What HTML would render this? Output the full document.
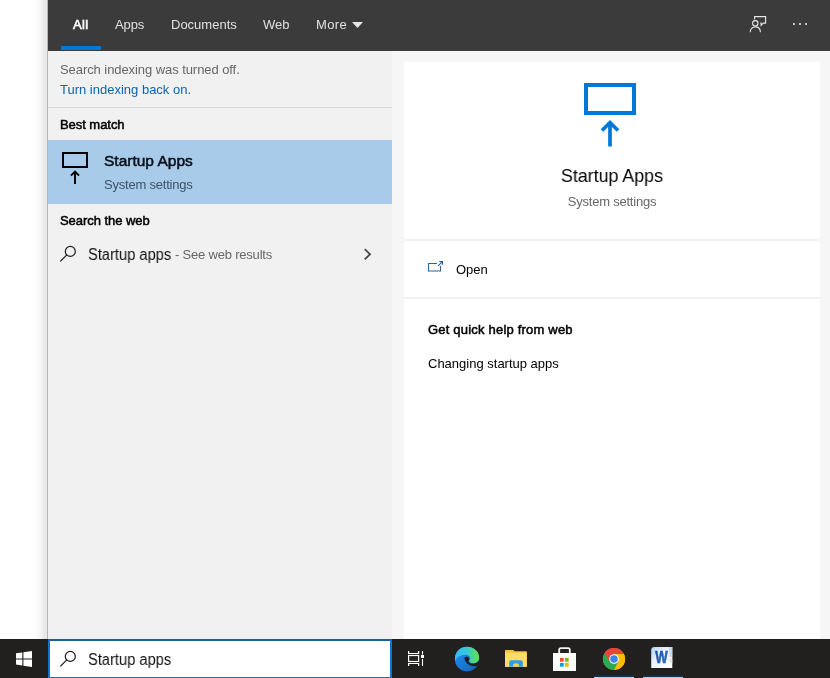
<!DOCTYPE html>
<html lang="en">
<head>
<meta charset="utf-8">
<title>Startup apps - Search</title>
<style>
*{margin:0;padding:0;box-sizing:border-box}
html,body{width:830px;height:678px;overflow:hidden;background:#fff}
body{position:relative;font-family:"Liberation Sans",sans-serif;font-size:13px;color:#000;-webkit-font-smoothing:antialiased}
.abs{position:absolute}
.t{will-change:transform;position:absolute;white-space:nowrap;line-height:1}
#shadow{left:34px;top:0;width:13px;height:639px;background:linear-gradient(to right,#fff 0,#f8f8f8 38%,#f3f3f3 62%,#e9e9e9 74%,#e8e8e8 100%)}
#edge1{left:47px;top:0;width:1px;height:639px;background:#b4b4b4}
#hdr{left:48px;top:0;width:782px;height:51px;background:#3b3b3b}
#tabline{left:61px;top:45.5px;width:40px;height:4.5px;background:#0078d7}
#left{left:48px;top:51px;width:344px;height:588px;background:#f1f1f1}
#right{left:392px;top:51px;width:438px;height:588px;background:#f6f6f6}
#card{left:404px;top:62px;width:416px;height:577px;background:#fff}
#sel{left:48px;top:140px;width:344px;height:64px;background:#a7cbe9}
#div1{left:48px;top:107px;width:344px;height:1px;background:#d9d9d9}
.cdiv{left:404px;width:416px;height:2px;background:#f2f2f2}
#task{left:0;top:639px;width:830px;height:39px;background:#21201f}
#sbox{left:48px;top:639px;width:344px;height:40px;background:#fff;border:2px solid #0a76d3;border-top-color:#1c5e9b}
.tab{color:#e0e0e0;font-size:13px}
.gray{color:#666}
.b{-webkit-text-stroke:0.5px currentColor;letter-spacing:-0.05px}
</style>
</head>
<body>
<div class="abs" id="shadow"></div>
<div class="abs" id="edge1"></div>
<div class="abs" id="hdr"></div>
<div class="abs" id="tabline"></div>
<div class="t tab" style="left:72.5px;top:18px;color:#fff;letter-spacing:0.35px;-webkit-text-stroke:0.6px #fff">All</div>
<div class="t tab" style="left:115px;top:18px;letter-spacing:-0.1px">Apps</div>
<div class="t tab" style="left:170.5px;top:18px">Documents</div>
<div class="t tab" style="left:263px;top:18px">Web</div>
<div class="t tab" style="left:315.5px;top:18px;letter-spacing:0.4px">More</div>
<svg class="abs" id="tri" style="left:352px;top:22px" width="11" height="6" viewBox="0 0 11 6"><path d="M0 0h11L5.5 6z" fill="#e6e6e6"/></svg>
<svg class="abs" id="fb" style="left:749px;top:15px" width="18" height="18" viewBox="0 0 18 18" fill="none" stroke="#e6e6e6" stroke-width="1.100"><path d="M5.600 4.500V1.600h11V8.100H14.300l-2.200 2.300V8.100h-.8"/><circle cx="6.300" cy="8.300" r="2.700"/><path d="M1.200 17.300c0-3.400 2.200-5.400 5.100-5.400s5.100 2 5.100 5.400"/></svg>
<svg class="abs" id="dots" style="left:792px;top:22px" width="16" height="4" viewBox="0 0 16 4"><circle cx="2" cy="2" r="1.100" fill="#e6e6e6"/><circle cx="8" cy="2" r="1.100" fill="#e6e6e6"/><circle cx="14" cy="2" r="1.100" fill="#e6e6e6"/></svg>

<div class="abs" id="left"></div>
<div class="abs" id="right"></div>
<div class="abs" id="card"></div>

<div class="t gray" style="left:60px;top:63px;letter-spacing:-0.07px">Search indexing was turned off.</div>
<div class="t" style="left:60px;top:83px;color:#0a64b0">Turn indexing back on.</div>
<div class="abs" id="div1"></div>
<div class="t b" style="left:60px;top:118px">Best match</div>
<div class="abs" id="sel"></div>
<svg class="abs" id="ico1" style="left:61px;top:151px" width="28" height="35" viewBox="0 0 28 35" fill="none" stroke="#000" stroke-width="2"><rect x="2" y="2" width="24" height="14"/><path d="M14 33V20.800M10 24.700l4-4 4 4" stroke-width="1.900"/></svg>
<div class="t b" style="left:104px;top:152.8px;font-size:15.5px;letter-spacing:0px;color:#050d18">Startup Apps</div>
<div class="t" style="left:104px;top:178px;letter-spacing:-0.21px;color:#3e5269">System settings</div>
<div class="t b" style="left:60px;top:214px">Search the web</div>
<svg class="abs" id="mag1" style="left:59px;top:245px" width="18" height="18" viewBox="0 0 18 18" fill="none" stroke="#1a1a1a" stroke-width="1.2"><circle cx="11.3" cy="6.4" r="5"/><path d="M7.800 9.900L1.300 16.400"/></svg>
<div class="t" style="left:88px;top:247px;font-size:16px;color:#111;transform:scaleX(.917);transform-origin:0 50%">Startup apps</div>
<div class="t gray" style="left:175.2px;top:248.4px;letter-spacing:-0.2px">- See web results</div>
<svg class="abs" id="chev" style="left:362px;top:248px" width="10" height="13" viewBox="0 0 10 13" fill="none" stroke="#444" stroke-width="1.7"><path d="M2.7 1.1l5.4 5.1L2.7 11.3"/></svg>

<svg class="abs" id="ico2" style="left:582px;top:82px" width="56" height="66" viewBox="0 0 56 66" fill="none" stroke="#0078d7" stroke-width="4"><rect x="4" y="3" width="48" height="28"/><path d="M28 64.5V41M20 48.5l8-8 8 8" stroke-width="3.7"/></svg>
<div class="t" style="left:404px;width:416px;text-align:center;top:166.4px;font-size:19px;color:#000;transform:scaleX(.9365);transform-origin:50% 50%">Startup Apps</div>
<div class="t gray" style="left:404px;width:416px;text-align:center;top:195px;letter-spacing:-0.22px">System settings</div>
<div class="abs cdiv" style="top:239px"></div>
<svg class="abs" id="open" style="left:427px;top:260px" width="17" height="14" viewBox="0 0 17 14" fill="none" stroke="#2e6396" stroke-width="1.1"><path d="M10 3.5H1.5V11h12V6"/><path d="M12.3 1.5h3.2v3.2M15.5 1.5l-4.300 4.300"/></svg>
<div class="t" style="left:456px;top:263px">Open</div>
<div class="abs cdiv" style="top:297px"></div>
<div class="t b" style="left:428px;top:323px;letter-spacing:0.2px">Get quick help from web</div>
<div class="t" style="left:428px;top:357px">Changing startup apps</div>

<div class="abs" id="task"></div>
<svg class="abs" id="win" style="left:16px;top:651px" width="16" height="16" viewBox="0 0 16 16" fill="#fff"><path d="M0 2.300l6.300-.9v6H0zM7.400 1.250L16 0v7.400H7.400zM0 8.500h6.300v6L0 13.600zM7.400 8.500H16V16l-8.600-1.250z"/></svg>
<div class="abs" id="sbox"></div>
<svg class="abs" id="mag2" style="left:59px;top:650.2px" width="18" height="18" viewBox="0 0 18 18" fill="none" stroke="#1a1a1a" stroke-width="1.2"><circle cx="11.3" cy="6.4" r="5"/><path d="M7.800 9.900L1.300 16.400"/></svg>
<div class="t" style="left:88px;top:651.5px;font-size:16px;color:#111;transform:scaleX(.917);transform-origin:0 50%">Startup apps</div>

<svg class="abs" id="tv" style="left:406px;top:649px" width="20" height="19" viewBox="0 0 20 19" fill="none" stroke="#fff" stroke-width="1.200"><path d="M2.600 2v2.500h10V2M2.600 17v-2.500h10V17"/><rect x="2.600" y="6.500" width="10" height="6"/><path d="M16.500 2v3.500M16.500 10v7" stroke-width="1.100"/><rect x="15" y="6" width="3" height="3" fill="#fff" stroke="none"/></svg>
<svg class="abs" id="edge" style="left:454px;top:646.3px" width="26" height="26" viewBox="0 0 26 26"><defs><linearGradient id="eg1" x1="0" y1="0" x2="1" y2="0"><stop offset="0" stop-color="#3bb8f4"/><stop offset=".45" stop-color="#33c8dc"/><stop offset="1" stop-color="#62e248"/></linearGradient><linearGradient id="eg2" x1="0" y1="0" x2="1" y2="1"><stop offset="0" stop-color="#2196f6"/><stop offset="1" stop-color="#1260b8"/></linearGradient></defs><circle cx="13" cy="13" r="12.2" fill="url(#eg2)"/><path d="M1 12C1.500 5.500 6.500.8 13 .8c7 0 12.200 5 12.200 10.700 0 3.300-2.500 5.700-5.700 5.700-2.600 0-4.300-1-4.300-2.400 0-.9.900-1.300.9-2.700 0-2-1.800-3.300-4-3.300C7 8.800 3 10.500 1 15z" fill="url(#eg1)"/><path d="M10.500 11.500c2-1.500 4.700-.5 4.800 1.500 0 1-.8 1.300-.8 2.300 0 1.500 2 2.500 4.500 2.500 2.700 0 5-1.500 6.200-3.500.4 2 .1 3.700-.7 5.200-2.500 1-6 1-9-.5-3-1.500-5-4-5-7.500z" fill="#21201f"/></svg>
<svg class="abs" id="exp" style="left:504px;top:648px" width="24" height="20" viewBox="0 0 24 20"><path d="M1 1.900h8.300l1.300 1.300H22.800V18.800H1z" fill="#f3c13f"/><path d="M1 4.600h21.800V18.800H1z" fill="#ffdc68"/><path d="M5.200 18.800v-4.300c0-1.400 1-2.300 2.300-2.300h9c1.300 0 2.300.9 2.300 2.300v4.300z" fill="#2f9be8"/><path d="M9 18.800v-1.300c0-1.300 1.300-2.200 3-2.200s3 .9 3 2.200v1.300z" fill="#f7d24e"/></svg>
<svg class="abs" id="store" style="left:552px;top:646px" width="25" height="26" viewBox="0 0 25 26"><path d="M7.200 7V3.800c0-1 .7-1.700 1.700-1.700h7.200c1 0 1.700.7 1.700 1.700V7" fill="none" stroke="#f4f4f4" stroke-width="1.800"/><rect x="1" y="7" width="23" height="18" fill="#fbfbfb"/><rect x="8" y="12" width="3.700" height="3.700" fill="#f04e23"/><rect x="13" y="12" width="3.700" height="3.700" fill="#7fbb00"/><rect x="8" y="17" width="3.700" height="3.700" fill="#00a3ee"/><rect x="13" y="17" width="3.700" height="3.700" fill="#f0b800"/></svg>
<svg class="abs" id="chrome" style="left:601.8px;top:647px" width="24" height="24" viewBox="0 0 24 24"><circle cx="12" cy="12" r="11.100" fill="#e8453c"/><path d="M12 12L2.400 6.450A11.100 11.100 0 0 0 12 23.100z" fill="#2da94f"/><path d="M12 12v11.100A11.100 11.100 0 0 0 21.600 6.450z" fill="#fdbd00"/><path d="M12 12L2.400 6.450A11.100 11.100 0 0 1 21.600 6.450z" fill="#e8453c"/><path d="M12 7h9.800A11.100 11.100 0 0 1 16.300 22.200L12 17z" fill="#fdbd00"/><path d="M12 17l-4.300-2.500L2.400 6.450A11.100 11.100 0 0 0 12 23.100l4.300-8.600z" fill="#2da94f"/><path d="M7.700 14.500L2.400 6.450A11.100 11.100 0 0 1 21.800 7H12z" fill="#e8453c"/><circle cx="12" cy="12" r="4.800" fill="#fff"/><circle cx="12" cy="12" r="3.750" fill="#3f83f0"/></svg>
<svg class="abs" id="word" style="left:650px;top:646px;will-change:transform" width="24" height="23" viewBox="0 0 24 23"><defs><linearGradient id="wg" x1="0" y1="0" x2="1" y2="1"><stop offset="0" stop-color="#b4d0f4"/><stop offset=".4" stop-color="#eaf2fd"/><stop offset="1" stop-color="#fff"/></linearGradient><linearGradient id="wt" x1="0" y1="0" x2="1" y2="1"><stop offset="0" stop-color="#17489a"/><stop offset="1" stop-color="#2f7fd8"/></linearGradient></defs><path d="M4.500 1H22.300V22H1.200V4.300Q1.200 1 4.500 1z" fill="url(#wg)"/><path d="M18.500 1h3.800v10.500l-2.300-.8z" fill="#c5d9f4"/><path d="M19.500 11.500l2.800 1.200v4.800l-3.300-2z" fill="#e3e8f0"/><text transform="translate(11.400 16.600) scale(.8 1)" text-anchor="middle" font-family="Liberation Sans, sans-serif" font-weight="bold" font-size="16.500" fill="url(#wt)" stroke="#1d55a8" stroke-width=".5">W</text></svg>
<div class="abs" style="left:594px;top:675px;width:40px;height:3px;background:linear-gradient(#1b2a3a 0,#12304f 66.6%,#a9cdee 66.7%)"></div>
<div class="abs" style="left:643px;top:675px;width:40px;height:3px;background:linear-gradient(#1b2a3a 0,#12304f 66.6%,#a9cdee 66.7%)"></div>
</body>
</html>
